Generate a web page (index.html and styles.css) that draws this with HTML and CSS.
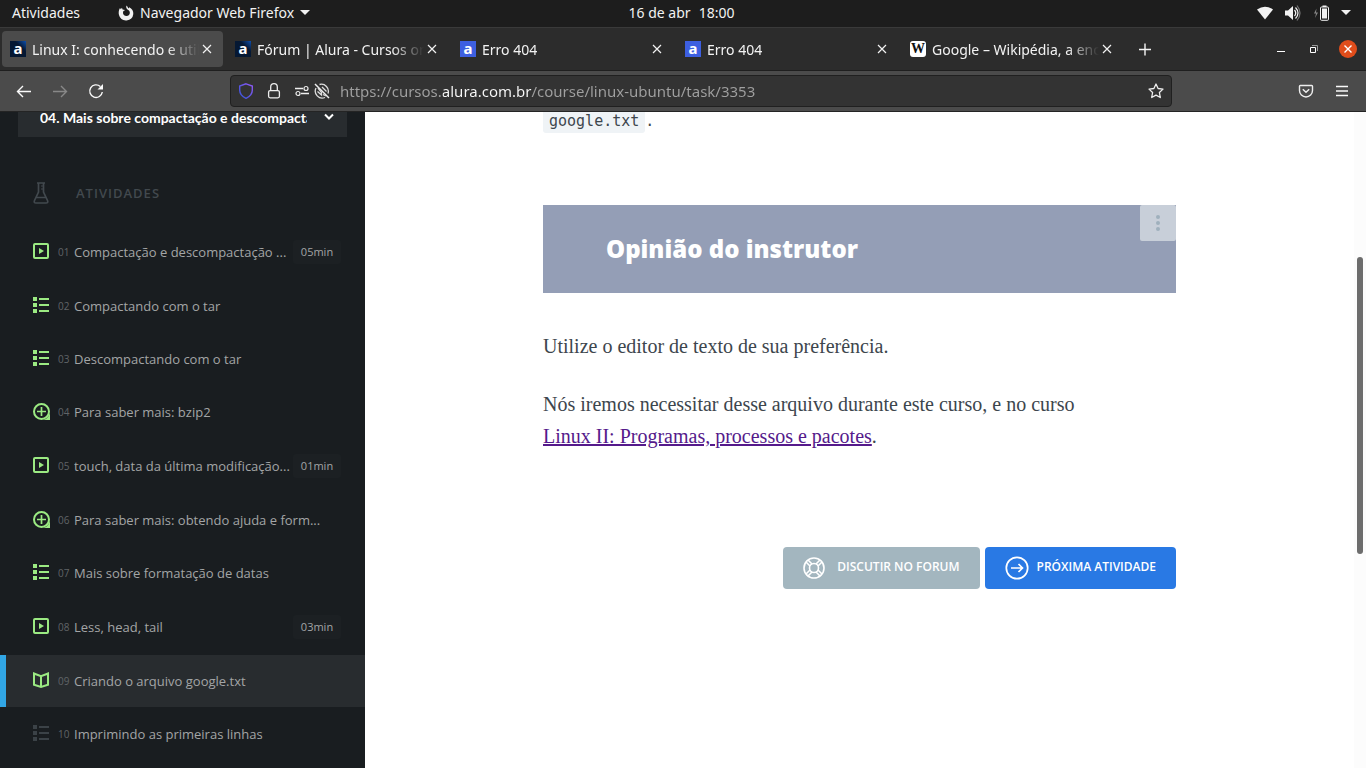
FILE: index.html
```html
<!DOCTYPE html>
<html lang="pt-BR">
<head>
<meta charset="utf-8">
<title>Linux I: conhecendo e utilizando o terminal</title>
<link rel="stylesheet" href="styles.css">
</head>
<body>
<svg class="sprite" aria-hidden="true">
  <symbol id="i-close" viewBox="0 0 16 16"><path d="M4 4l8 8M12 4l-8 8" stroke="currentColor" stroke-width="1.2" fill="none"/></symbol>
  <symbol id="i-caret" viewBox="0 0 10 6"><path d="M0 0h10L5 5z" fill="currentColor"/></symbol>
  <symbol id="i-video" viewBox="0 0 18 18"><rect x="1" y="1" width="14" height="14" rx="1" fill="none" stroke="currentColor" stroke-width="2"/><path d="M6 5v6l5-3z" fill="currentColor"/></symbol>
  <symbol id="i-list" viewBox="0 0 18 18"><path d="M0 0h4v4H0zM0 6h4v4H0zM0 12h4v4H0zM6 1h10v2H6zM6 7h10v2H6zM6 13h10v2H6z" fill="currentColor"/></symbol>
  <symbol id="i-plus" viewBox="0 0 18 18"><circle cx="8.5" cy="8.5" r="7.5" fill="none" stroke="currentColor" stroke-width="2"/><path d="M17 10v7h-7q5-1 7-7z" fill="currentColor"/><path d="M8.500 4v9M4 8.500h9" stroke="currentColor" stroke-width="1.700"/></symbol>
  <symbol id="i-book" viewBox="0 0 18 18"><path d="M1 1.500l7 2.700 7-2.700v11.300L8 15 1 12.800zM8 4v11" fill="none" stroke="currentColor" stroke-width="2"/></symbol>
</svg>

<header class="system-bar">
  <div class="system-left">
    <button class="system-item" type="button">Atividades</button>
    <button class="system-item system-app" type="button">
      <svg width="16" height="16" viewBox="0 0 16 16"><path d="M8.500 0.500c1 1 1.500 1.800 1.700 3 .5-.3.800-.8.900-1.300C14 3.500 15.600 6 15.300 9A7.300 7.300 0 0 1 1 10C.3 7.500.8 5 2 3l.8 1.300L4 2.800l.5 1.600c1 0 1.800.2 2.500.7-.5.800-1.700.8-2 1.800C4.700 9.500 6.500 11 8.500 11c2 0 3.600-1.600 3.300-3.700C11.500 5.300 10 5 9 4 8.200 3 8 1.700 8.500.5z" fill="#f2f2f2"/></svg>
      <span>Navegador Web Firefox</span>
      <svg width="10" height="6"><use href="#i-caret"/></svg>
    </button>
  </div>
  <div class="clock"><span>16 de abr</span><span>18:00</span></div>
  <div class="system-tray">
    <svg width="16" height="16" viewBox="0 0 16 16"><path d="M0 4.500Q8-1 16 4.500L8 14.500z" fill="#f2f2f2"/></svg>
    <svg class="tray-volume" width="16" height="16" viewBox="0 0 16 16"><path d="M0 5.500h3L8 1v14L3 10.500H0z" fill="#f2f2f2"/><path d="M9.500 5q2.500 3 0 6" stroke="#f2f2f2" stroke-width="1.300" fill="none"/><path d="M10.500 2.500q5 5.500 0 11" stroke="#f2f2f2" stroke-width="1.200" fill="none"/><path d="M12 .5q6 7.500 0 15" stroke="#777" stroke-width="1.200" fill="none"/></svg>
    <svg width="16" height="16" viewBox="0 0 16 16"><path d="M3.500 3.500L1 8.500h2L2 13l3-5.500H3z" fill="#888"/><rect x="7.500" y="2" width="8" height="13.300" rx="1" fill="none" stroke="#f2f2f2"/><path d="M9 3.500h5v10H9zM9.500.5h4V2h-4z" fill="#f2f2f2"/></svg>
    <svg width="10" height="6"><use href="#i-caret"/></svg>
  </div>
</header>

<nav class="tab-bar" aria-label="Abas">
  <div class="tab tab-active">
    <span class="favicon favicon-dark">a</span><span class="tab-title">Linux I: conhecendo e util</span>
    <button class="tab-close" type="button" aria-label="Fechar aba"><svg width="16" height="16"><use href="#i-close"/></svg></button>
  </div>
  <div class="tab">
    <span class="favicon favicon-dark">a</span><span class="tab-title">Fórum | Alura - Cursos onl</span>
    <button class="tab-close" type="button" aria-label="Fechar aba"><svg width="16" height="16"><use href="#i-close"/></svg></button>
  </div>
  <div class="tab">
    <span class="favicon favicon-blue">a</span><span class="tab-title">Erro 404</span>
    <button class="tab-close" type="button" aria-label="Fechar aba"><svg width="16" height="16"><use href="#i-close"/></svg></button>
  </div>
  <div class="tab">
    <span class="favicon favicon-blue">a</span><span class="tab-title">Erro 404</span>
    <button class="tab-close" type="button" aria-label="Fechar aba"><svg width="16" height="16"><use href="#i-close"/></svg></button>
  </div>
  <div class="tab">
    <span class="favicon favicon-wiki">W</span><span class="tab-title">Google – Wikipédia, a enc</span>
    <button class="tab-close" type="button" aria-label="Fechar aba"><svg width="16" height="16"><use href="#i-close"/></svg></button>
  </div>
  <button class="new-tab" type="button" aria-label="Nova aba"><svg width="16" height="16" viewBox="0 0 16 16"><path d="M8 2.500v12M2 8.500h12" stroke="#f5f5f5" stroke-width="1.400"/></svg></button>
  <div class="window-controls">
    <button type="button" aria-label="Minimizar"><svg width="16" height="16" viewBox="0 0 16 16"><path d="M4 10.500h8" stroke="#fff"/></svg></button>
    <button type="button" aria-label="Restaurar"><svg width="16" height="16" viewBox="0 0 16 16"><path d="M4.500 6.500h5v5h-5z" stroke="#fff" fill="none"/><path d="M6 4.500h5.500V10" stroke="#999" fill="none"/></svg></button>
    <button class="window-close" type="button" aria-label="Fechar"><svg width="18" height="18" viewBox="0 0 18 18"><circle cx="9" cy="9" r="9" fill="#e04d1b"/><path d="M5.500 5.500l7 7M12.500 5.500l-7 7" stroke="#fff" stroke-width="1.400"/></svg></button>
  </div>
</nav>

<div class="toolbar">
  <div class="nav-buttons">
    <button type="button" aria-label="Voltar"><svg width="16" height="16" viewBox="0 0 16 16"><path d="M15 8.500H1.500M7 3L1.500 8.500 7 14" stroke="#fafafa" stroke-width="1.400" fill="none"/></svg></button>
    <button type="button" aria-label="Avançar" disabled><svg width="16" height="16" viewBox="0 0 16 16"><path d="M1 8.500h13.500M9 3l5.500 5.500L9 14" stroke="#888" stroke-width="1.400" fill="none"/></svg></button>
    <button type="button" aria-label="Recarregar"><svg width="16" height="16" viewBox="0 0 16 16"><path d="M12.300 3.500A6.300 6.300 0 1 0 14.300 9" stroke="#fafafa" stroke-width="1.400" fill="none"/><path d="M15 1v5.500H9.500z" fill="#fafafa"/></svg></button>
  </div>
  <div class="url-bar">
    <svg width="16" height="16" viewBox="0 0 16 16"><defs><linearGradient id="shield" x1="0" y1="1" x2="1" y2="0"><stop offset="0" stop-color="#3454d8"/><stop offset="1" stop-color="#9059f5"/></linearGradient></defs><path d="M8 .8l6.300 2.300v4.200c0 3.500-2.500 6.300-6.300 8.100C4.200 13.600 1.700 10.800 1.700 7.300V3.100z" stroke="url(#shield)" stroke-width="1.400" fill="none"/></svg>
    <svg class="url-lock" width="16" height="16" viewBox="0 0 16 16"><rect x="2.600" y="7.600" width="10.800" height="7.200" rx="1.500" stroke="#eee" stroke-width="1.300" fill="none"/><path d="M4.700 7.500V4a3.300 3.300 0 0 1 6.600 0v3.500" stroke="#eee" stroke-width="1.300" fill="none"/></svg>
    <svg class="url-permissions" width="16" height="16" viewBox="0 0 16 16"><path d="M1 5.500h8M7 10.500h8" stroke="#eee" stroke-width="1.300"/><circle cx="12" cy="5.500" r="2" stroke="#eee" fill="none" stroke-width="1.200"/><circle cx="4" cy="10.500" r="2" stroke="#eee" fill="none" stroke-width="1.200"/></svg>
    <svg width="16" height="16" viewBox="0 0 16 16"><path d="M5.500 1.500a7 7 0 0 1 8.500 9M11 14.500A7 7 0 0 1 2 5" stroke="#ddd" stroke-width="1.300" fill="none"/><path d="M1 1l14 14" stroke="#eee" stroke-width="1.500"/><path d="M4 5l3.500 4.500V12L3.500 8.500M8 4l4.500 4.500M9 11.500L12 13" stroke="#ddd" stroke-width="1.300" fill="none"/></svg>
    <input class="url-input" type="text" aria-label="Endereço" value="https://cursos.alura.com.br/course/linux-ubuntu/task/3353">
    <button class="url-star" type="button" aria-label="Adicionar aos favoritos"><svg width="16" height="16" viewBox="0 0 16 16"><path d="M8 1l2.100 4.500 4.900.6-3.600 3.400.9 5L8 12.100 3.700 14.500l.9-5L1 6.100l4.900-.6z" stroke="#eee" stroke-width="1.300" stroke-linejoin="round" fill="none"/></svg></button>
  </div>
  <div class="toolbar-actions">
    <button type="button" aria-label="Pocket"><svg width="16" height="16" viewBox="0 0 16 16"><path d="M2.300 2.500h11.400q.8 0 .8.800v4.200a6.500 6.500 0 0 1-13 0V3.300q0-.8.800-.8z" stroke="#eee" stroke-width="1.400" fill="none"/><path d="M4.800 6.300L8 9.300l3.200-3" stroke="#eee" stroke-width="1.500" fill="none"/></svg></button>
    <button type="button" aria-label="Menu"><svg width="16" height="16" viewBox="0 0 16 16"><path d="M2 3.500h12M2 8h12M2 12.500h12" stroke="#fafafa" stroke-width="1.300"/></svg></button>
  </div>
</div>

<div class="page">
  <aside class="sidebar">
    <div class="section-picker">
      <select class="section-select" aria-label="Aula"><option>04. Mais sobre compactação e descompactação</option></select>
      <svg class="section-chevron" width="10" height="8" viewBox="0 0 10 8"><path d="M1 1.500l4 4 4-4" stroke="#fff" stroke-width="2" fill="none"/></svg>
    </div>
    <h2 class="sidebar-heading">
      <svg width="16" height="22" viewBox="0 0 16 22"><path d="M4 1h8M5.500 1v9L1.500 18.500Q.5 21 3 21h10q2.500 0 1.500-2.500L10.500 10V1M3 15.500h10" stroke="currentColor" stroke-width="1.700" fill="none"/><path d="M8 4h2.500M8 7h2.500" stroke="currentColor"/></svg>
      <span>Atividades</span>
    </h2>
    <ul class="tasks">
      <li><a class="task task-video" href="#"><svg class="task-icon"><use href="#i-video"/></svg><span class="task-number">01</span><span class="task-title">Compactação e descompactação ...</span><span class="task-time">05min</span></a></li>
      <li><a class="task" href="#"><svg class="task-icon"><use href="#i-list"/></svg><span class="task-number">02</span><span class="task-title">Compactando com o tar</span></a></li>
      <li><a class="task" href="#"><svg class="task-icon"><use href="#i-list"/></svg><span class="task-number">03</span><span class="task-title">Descompactando com o tar</span></a></li>
      <li><a class="task" href="#"><svg class="task-icon"><use href="#i-plus"/></svg><span class="task-number">04</span><span class="task-title">Para saber mais: bzip2</span></a></li>
      <li><a class="task task-video" href="#"><svg class="task-icon"><use href="#i-video"/></svg><span class="task-number">05</span><span class="task-title">touch, data da última modificação...</span><span class="task-time">01min</span></a></li>
      <li><a class="task" href="#"><svg class="task-icon"><use href="#i-plus"/></svg><span class="task-number">06</span><span class="task-title">Para saber mais: obtendo ajuda e form...</span></a></li>
      <li><a class="task" href="#"><svg class="task-icon"><use href="#i-list"/></svg><span class="task-number">07</span><span class="task-title">Mais sobre formatação de datas</span></a></li>
      <li><a class="task task-video" href="#"><svg class="task-icon"><use href="#i-video"/></svg><span class="task-number">08</span><span class="task-title">Less, head, tail</span><span class="task-time">03min</span></a></li>
      <li><a class="task task-current" href="#" aria-current="page"><svg class="task-icon"><use href="#i-book"/></svg><span class="task-number">09</span><span class="task-title">Criando o arquivo google.txt</span></a></li>
      <li><a class="task task-pending" href="#"><svg class="task-icon"><use href="#i-list"/></svg><span class="task-number">10</span><span class="task-title">Imprimindo as primeiras linhas</span></a></li>
    </ul>
  </aside>

  <main class="content">
    <article class="lesson">
      <p class="lesson-code"><code>google.txt</code>.</p>
      <header class="opinion">
        <h2>Opinião do instrutor</h2>
        <button class="opinion-more" type="button" aria-label="Mais opções"><svg width="4" height="16" viewBox="0 0 4 16"><circle cx="2" cy="2" r="2"/><circle cx="2" cy="8" r="2"/><circle cx="2" cy="14" r="2"/></svg></button>
      </header>
      <p>Utilize o editor de texto de sua preferência.</p>
      <p>Nós iremos necessitar desse arquivo durante este curso, e no curso <a href="#">Linux II: Programas, processos e pacotes</a>.</p>
      <div class="actions">
        <button class="action action-forum" type="button"><svg width="22" height="22" viewBox="0 0 22 22" fill="none" stroke="#fff" stroke-width="1.600"><circle cx="11" cy="11" r="10"/><circle cx="11" cy="11" r="4.500"/><path d="M3 5l4 4M5 3l4 4M19 5l-4 4M17 3l-4 4M3 17l4-4M5 19l4-4M19 17l-4-4M17 19l-4-4"/></svg><span>Discutir no forum</span></button>
        <button class="action action-next" type="button"><svg width="24" height="24" viewBox="0 0 24 24" fill="none" stroke="#fff" stroke-width="1.700"><circle cx="12" cy="12" r="10.700"/><path d="M6 12h11.500M13.500 8l4 4-4 4"/></svg><span>Próxima atividade</span></button>
      </div>
    </article>
  </main>
  <div class="scroll-track"><div class="scroll-thumb"></div></div>
</div>
</body>
</html>
```

FILE: styles.css
```css
* {
  box-sizing: border-box;
}

body {
  margin: 0;
  height: 100vh;
  display: flex;
  flex-direction: column;
  overflow: hidden;
  font-family: "Noto Sans", "Open Sans", sans-serif;
  font-size: 14px;
  color: #f2f2f2;
  background: #fff;
}

button {
  display: inline-flex;
  align-items: center;
  justify-content: center;
  padding: 0;
  border: 0;
  background: none;
  color: inherit;
  font: inherit;
}

svg {
  display: block;
  flex: none;
}

.sprite {
  position: absolute;
  width: 0;
  height: 0;
}

/* Desktop bar */
.system-bar {
  flex: none;
  display: grid;
  grid-template-columns: 1fr auto 1fr;
  align-items: center;
  height: 27px;
  padding: 0 15px 2px 12px;
  background: #1d1d1d;
}

.system-left,
.system-tray,
.clock {
  display: flex;
  align-items: center;
}

.system-left {
  gap: 38px;
}

.system-app {
  gap: 6px;
}

.clock {
  gap: 8px;
}

.system-tray {
  justify-content: flex-end;
  gap: 12px;
}

/* Tabs */
.tab-bar {
  flex: none;
  display: flex;
  align-items: center;
  height: 44px;
  background: #2c2c2c;
  border-top: 1px solid #3a3a3a;
  border-bottom: 1px solid #1f1f1f;
}

.tab {
  flex: 0 1 221px;
  min-width: 0;
  display: flex;
  align-items: center;
  height: 36px;
  margin: 0 2px;
  padding: 0 8px;
  border-radius: 4px;
}

.tab-active {
  background: #4b4b4b;
}

.favicon {
  flex: none;
  width: 16px;
  height: 16px;
  margin-right: 6px;
  color: #fff;
  font: 700 15px/14px "Noto Sans", sans-serif;
  text-align: center;
}

.favicon-dark {
  background: linear-gradient(45deg, #051833 65%, #0d4fae);
}

.favicon-blue {
  background: #3d5fe0;
}

.favicon-wiki {
  border-radius: 3px;
  background: #fff;
  color: #111;
  font: 700 14px/16px "Liberation Serif", serif;
}

.tab-title {
  flex: 1;
  min-width: 0;
  overflow: hidden;
  white-space: nowrap;
  -webkit-mask-image: linear-gradient(to left, transparent, #000 32px);
  mask-image: linear-gradient(to left, transparent, #000 32px);
}

.tab-close {
  flex: none;
}

.new-tab {
  width: 40px;
  height: 36px;
}

.window-controls {
  display: flex;
  align-items: center;
  gap: 17px;
  margin-left: auto;
  padding-right: 9px;
}

/* Toolbar */
.toolbar {
  flex: none;
  display: flex;
  align-items: center;
  justify-content: space-between;
  height: 41px;
  padding: 0 16px;
  background: #4b4b4b;
  border-bottom: 1px solid #242424;
}

.nav-buttons,
.toolbar-actions {
  display: flex;
  gap: 20px;
}

.url-bar {
  flex: 0 1 942px;
  display: flex;
  align-items: center;
  height: 32px;
  padding: 0 7px;
  border: 1px solid #202020;
  border-radius: 4px;
  background: #333;
}

.url-lock,
.url-permissions {
  margin-left: 12px;
}

.url-permissions {
  margin-right: 4px;
}

.url-input {
  flex: 1;
  min-width: 0;
  margin: 0 10px;
  padding: 0;
  border: 0;
  outline: 0;
  font-family: inherit;
  font-size: 15px;
  color: transparent;
  background: linear-gradient(to right, #a0a0a0 103px, #fafafa 103px 192px, #a0a0a0 192px);
  -webkit-background-clip: text;
  background-clip: text;
}

/* Page */
.page {
  flex: 1;
  min-height: 0;
  display: flex;
  position: relative;
  overflow: hidden;
}

.sidebar {
  flex: none;
  width: 365px;
  background: #191d20;
  color: #a3a5a6;
  font-family: "Open Sans", sans-serif;
}

.section-picker {
  position: relative;
  margin: -15px 18px 0;
}

.section-select {
  appearance: none;
  display: block;
  width: 100%;
  height: 40px;
  padding: 0 40px 0 22px;
  border: 0;
  border-radius: 0;
  background: #282c2f;
  color: #fff;
  font: 700 14px Lato, sans-serif;
}

.section-chevron {
  position: absolute;
  right: 13px;
  top: 16px;
}

.sidebar-heading {
  display: flex;
  align-items: center;
  gap: 27px;
  height: 24px;
  margin: 44px 0 20px 33px;
  color: #42494e;
  font-size: 13px;
  font-weight: 600;
  letter-spacing: 1px;
  text-transform: uppercase;
}

.tasks {
  display: grid;
  grid-template-columns: minmax(0, 1fr);
  gap: 1px;
  margin: 0;
  padding: 0;
  list-style: none;
}

.task {
  display: flex;
  align-items: center;
  height: 52px;
  padding: 0 24px 0 33px;
  color: inherit;
  font-size: 13px;
  text-decoration: none;
}

.task-video {
  height: 54px;
}

.task-current {
  padding-left: 27px;
  border-left: 6px solid #31a6e5;
  background: #282c2f;
}

.task-icon {
  width: 18px;
  height: 18px;
  color: #9bea82;
}

.task-pending .task-icon {
  color: #3b4247;
}

.task-number {
  width: 16px;
  margin-left: 7px;
  color: #606467;
  font-size: 10px;
}

.task-title {
  flex: 1;
  min-width: 0;
  overflow: hidden;
  white-space: nowrap;
  text-overflow: ellipsis;
}

.task-time {
  flex: none;
  width: 48px;
  border-radius: 3px;
  background: #1c2023;
  font-size: 11px;
  line-height: 24px;
  text-align: center;
}

.content {
  flex: 1;
  min-width: 0;
  padding: 0 12px 0 0;
  background: #fff;
}

.lesson {
  max-width: 633px;
  margin: 0 auto;
  color: #3d464d;
  font: 20px/32px "Liberation Serif", serif;
}

.lesson p {
  max-width: 560px;
  margin: 0 0 26px;
}

.lesson a {
  display: inline-block;
  color: #551a8b;
}

.lesson .lesson-code {
  margin: -7px 0 68px;
  font: 15px/32px "DejaVu Sans Mono", monospace;
}

.lesson-code code {
  padding: 4px 6px 3px;
  border-radius: 3px;
  background: #eff3f6;
  font: inherit;
}

.opinion {
  position: relative;
  margin-bottom: 37px;
  padding: 26px 63px;
  background: #949eb6;
}

.opinion h2 {
  margin: 0;
  color: #fff;
  font: 800 24px/36px "Open Sans", sans-serif;
}

.opinion-more {
  position: absolute;
  top: 0;
  right: 0;
  width: 36px;
  height: 36px;
  border-radius: 2px;
  background: #c8cfd9;
  fill: #9fb0bd;
}

.actions {
  display: flex;
  justify-content: flex-end;
  gap: 5px;
  margin-top: 95px;
}

.action {
  height: 42px;
  padding: 0 20px;
  border-radius: 4px;
  color: #fff;
  font: 600 12px "Open Sans", sans-serif;
  text-transform: uppercase;
}

.action span {
  padding-bottom: 3px;
}

.action-forum {
  gap: 12px;
  background: #a3b6bf;
}

.action-next {
  gap: 8px;
  background: #2979e4;
}

.scroll-track {
  position: absolute;
  top: 0;
  right: 0;
  bottom: 0;
  width: 12px;
  padding: 145px 3px 0;
  background: #fcfcfc;
}

.scroll-thumb {
  height: 297px;
  border-radius: 3px;
  background: #6d6d6d;
}
```
